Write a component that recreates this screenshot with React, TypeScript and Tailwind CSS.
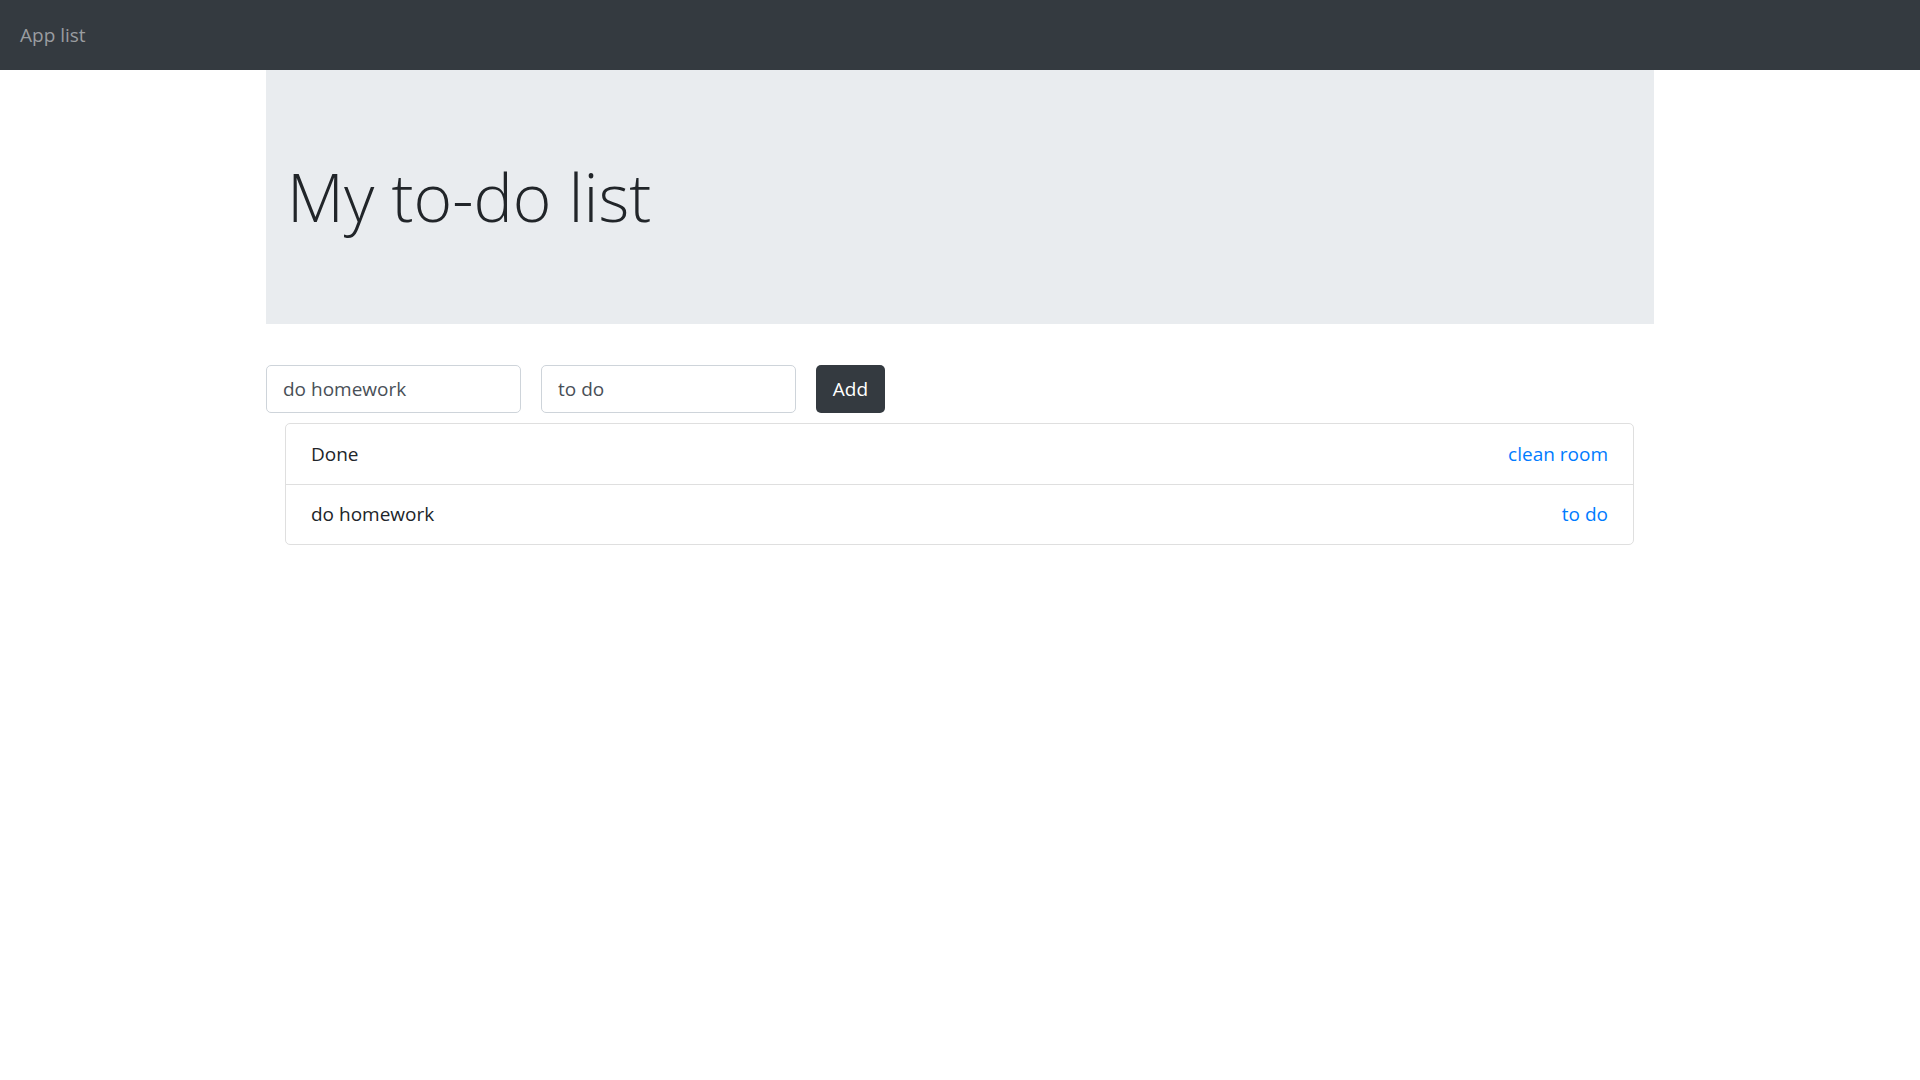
export default function App() {
  const items = [
    { name: "Done", status: "clean room" },
    { name: "do homework", status: "to do" },
  ];

  return (
    <div className="min-h-screen bg-white font-['Open_Sans',sans-serif] text-[#212529]">
      <nav className="flex h-[70px] items-center bg-[#343a40] px-5">
        <span className="text-[19px] text-[#9a9da0]">App list</span>
      </nav>

      <div className="ml-[266px] w-[1388px]">
        <div className="bg-[#e9ecef] pb-[88px] pl-[21px] pt-[87px]">
          <h1 className="text-[66px] font-light leading-[1.2]">My to-do list</h1>
        </div>

        <div className="mt-[41px] flex gap-5">
          <input
            className="h-12 w-[255px] rounded-[5px] border border-[#ced4da] px-4 text-[19px] text-[#495057] outline-none"
            defaultValue="do homework"
          />
          <input
            className="h-12 w-[255px] rounded-[5px] border border-[#ced4da] px-4 text-[19px] text-[#495057] outline-none"
            defaultValue="to do"
          />
          <button className="h-12 w-[69px] rounded-[5px] bg-[#343a40] text-[19px] text-white">
            Add
          </button>
        </div>

        <ul className="ml-[19px] mt-[10px] w-[1349px] rounded-[5px] border border-[#dfdfdf]">
          {items.map((item, i) => (
            <li
              key={item.name}
              className={`flex h-[60px] items-center justify-between px-[25px] text-[19px] ${
                i > 0 ? "border-t border-[#dfdfdf]" : ""
              }`}
            >
              <span>{item.name}</span>
              <a href="#" className="text-[#007bff]">
                {item.status}
              </a>
            </li>
          ))}
        </ul>
      </div>
    </div>
  );
}
